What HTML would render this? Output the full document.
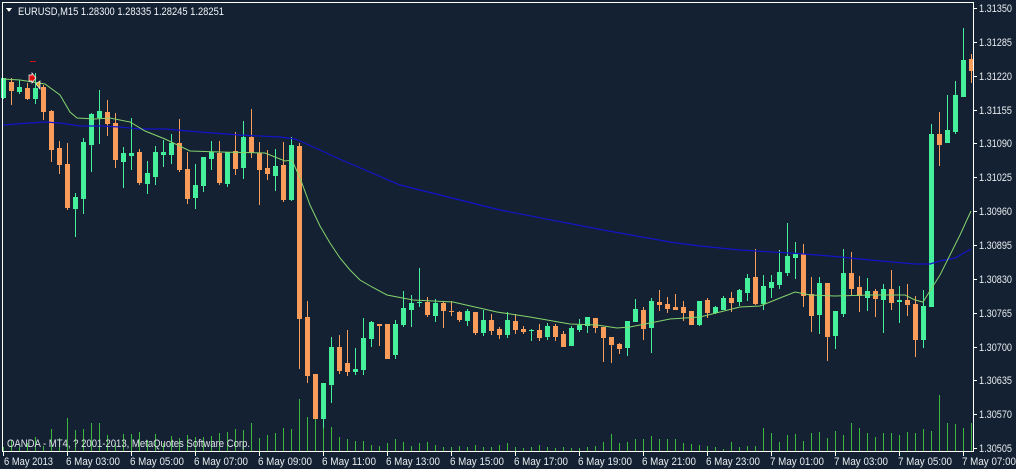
<!DOCTYPE html>
<html><head><meta charset="utf-8"><style>
html,body{margin:0;padding:0;background:#132132;}
body{width:1016px;height:469px;overflow:hidden;position:relative;font-family:"Liberation Sans",sans-serif;}
svg{position:absolute;left:0;top:0;}
</style></head><body>
<svg id="s" width="1016" height="469" xmlns="http://www.w3.org/2000/svg" shape-rendering="crispEdges">
<rect width="1016" height="469" fill="#132132"/>
<g id="vol" fill="#3cb83c"></g>
<g id="c"></g>
<polyline fill="none" stroke="#1414c8" stroke-width="1.2" shape-rendering="auto" points="3,125 15,124 30,123 45,122 60,123 80,126 100,126 120,127 140,129 165,129 200,132 240,135 280,137 295,139 300,141 320,150 335,157 400,185 500,210 603,230 670,242 700,246 740,250 790,253 830,256 870,260 915,264 930,264 940,261 955,258 971,249"/>
<polyline fill="none" stroke="#86d46e" stroke-width="1" shape-rendering="auto" points="3,79 20,80 45,84 60,95 70,112 77,118 95,119 110,118 130,122 145,131 165,139 190,151 220,152 265,153 285,161 292,160 300,178 310,205 320,226 330,243 340,258 350,270 360,280 372,287 387,295 413,300 453,302 497,312 530,317 570,324 597,325 617,328 630,327 670,319 700,317 740,307 760,306 785,296 795,292 810,295 835,296 870,295 905,295 915,300 923,302 940,275 960,235 971,211"/>
<rect x="30" y="61" width="6" height="1" fill="#d01010"/>
<polygon points="29,75 32,75 32,73 36,78 32,83 32,81 29,81" fill="#e01010" stroke="#fff" stroke-width="0.7" shape-rendering="auto"/>
<polygon points="36,84 40,81 40,89" fill="#e0a020" stroke="#fff" stroke-width="0.7" shape-rendering="auto"/>
<g fill="#fff">
<rect x="2" y="2" width="972" height="1"/>
<rect x="2" y="2" width="1" height="450"/>
<rect x="973" y="2" width="1" height="450"/>
<rect x="2" y="451" width="972" height="1"/>
</g>
<g id="ax" fill="#fff"></g>
<g id="t" font-size="11" fill="#e8ecf0" font-family="Liberation Sans, sans-serif"></g>
<text x="7" y="447" font-size="11" fill="#dfe3e8" font-family="Liberation Sans, sans-serif" textLength="243" lengthAdjust="spacingAndGlyphs">OANDA - MT4, ? 2001-2013, MetaQuotes Software Corp.</text>
<polygon points="6,8 12,8 9,12" fill="#fff"/>
<text x="18" y="15" font-size="11" fill="#f0f4f8" font-family="Liberation Sans, sans-serif" textLength="206" lengthAdjust="spacingAndGlyphs">EURUSD,M15  1.28300 1.28335 1.28245 1.28251</text>
</svg>
<script>
var D=[
['g',78,97,78,98],['o',82,90,78,104],['g',87,91,80,93],['o',88,98,83,99],['g',88,98,73,103],['o',87,111,85,119],['o',111,149,110,161],['o',148,164,141,173],['o',164,207,143,209],['g',197,208,193,236],
['g',142,198,138,213],['g',114,144,113,171],['g',111,117,90,143],['o',112,123,100,135],['o',123,159,113,167],['g',153,161,147,187],['g',153,155,118,169],['o',152,182,149,184],['g',173,183,161,193],['g',152,176,146,184],
['g',152,154,140,166],['g',143,154,134,163],['o',143,169,119,171],['o',169,198,152,203],['g',185,197,164,208],['g',157,185,157,191],['g',152,158,141,169],['o',153,182,141,184],['g',152,183,152,186],['o',151,168,132,174],
['g',137,167,121,178],['o',137,152,109,157],['o',153,169,142,204],['o',168,173,150,179],['g',166,175,149,190],['o',165,199,142,201],['g',145,199,137,200],['o',146,318,143,368],['o',317,375,301,382],['o',374,418,374,418],
['g',383,418,383,427],['g',347,384,337,402],['o',347,370,335,373],['o',363,371,330,375],['g',369,371,348,374],['g',338,369,318,374],['g',322,338,321,346],['o',324,325,324,345],['o',324,358,324,358],['g',324,354,320,358],
['g',308,324,291,326],['g',303,309,295,326],['g',302,302,268,306],['o',302,314,297,316],['g',303,315,299,321],['o',303,310,301,327],['o',311,311,301,315],['o',312,319,311,321],['g',311,320,309,325],['o',312,332,312,334],
['g',320,332,310,335],['o',320,330,314,334],['o',329,334,327,338],['g',320,334,312,337],['o',321,329,314,333],['o',329,331,326,333],['g',330,330,329,340],['o',330,337,324,340],['g',326,336,323,339],['o',326,336,324,340],
['o',334,346,331,346],['g',328,345,326,345],['g',325,329,319,331],['g',317,325,317,332],['o',318,327,318,332],['o',327,337,327,361],['o',337,344,337,362],['o',344,348,343,353],['g',321,347,321,355],['g',309,321,299,321],
['o',310,328,307,339],['g',301,327,298,352],['o',302,304,290,310],['o',304,308,297,312],['o',307,309,294,309],['o',307,312,301,320],['o',311,324,311,324],['g',301,324,301,325],['o',300,312,298,317],['g',307,312,306,313],
['g',298,309,296,309],['o',298,302,292,311],['g',290,301,289,305],['g',278,292,274,300],['o',277,303,249,304],['g',286,303,275,309],['g',282,287,275,297],['g',272,284,250,288],['g',256,272,223,275],['g',254,257,242,278],
['o',254,295,244,306],['o',294,315,277,331],['g',283,314,277,333],['o',283,336,283,360],['g',311,335,311,348],['g',273,313,249,316],['o',273,288,252,295],['o',287,295,276,311],['g',291,297,278,310],['o',291,298,289,316],
['g',289,299,284,332],['o',289,302,270,309],['g',300,301,286,322],['o',300,304,284,315],['o',304,339,296,356],['g',306,339,290,347],['g',134,306,124,306],['o',134,144,112,165],['g',130,142,95,142],['g',95,131,81,133],
['g',60,96,28,96],['o',59,70,54,82]];
var V=[447,440,447,443,437,446,429,438,418,430,429,423,423,435,443,434,434,432,440,434,443,436,438,435,437,437,436,433,432,429,430,423,438,435,433,428,429,399,417,418,427,
427,437,439,441,441,445,446,443,439,442,446,443,442,445,447,447,446,447,445,447,447,445,443,447,448,447,445,447,448,447,448,448,447,446,442,434,443,442,439,439,436,439,439,439,
443,444,445,446,447,449,442,447,446,446,428,433,442,435,434,441,433,432,438,431,435,423,428,433,437,433,433,435,432,433,429,431,395,423,424,428,423,432];
var NS="http://www.w3.org/2000/svg";
function R(g,x,y,w,h,f){var r=document.createElementNS(NS,"rect");r.setAttribute("x",x);r.setAttribute("y",y);r.setAttribute("width",w);r.setAttribute("height",h);if(f)r.setAttribute("fill",f);g.appendChild(r);}
function T(x,y,s,len){var e=document.createElementNS(NS,"text");e.setAttribute("x",x);e.setAttribute("y",y);e.setAttribute("textLength",len);e.setAttribute("lengthAdjust","spacingAndGlyphs");e.textContent=s;document.getElementById("t").appendChild(e);}
var c=document.getElementById("c"),vol=document.getElementById("vol");
D.forEach(function(d,k){var col=d[0]=='g'?'#45f09c':'#fb9d5a';var cx=3+8*k;
R(c,cx,d[3],1,d[4]-d[3]+1,col);R(c,cx-2,d[1],5,d[2]-d[1]+1,col);});
V.forEach(function(y,k){if(k<D.length)R(vol,3+8*k,y,1,451-y);});
var ax=document.getElementById("ax");
var P=["1.31350","1.31285","1.31220","1.31155","1.31090","1.31025","1.30960","1.30895","1.30830","1.30765","1.30700","1.30635","1.30570","1.30505"];
P.forEach(function(p,i){var y=Math.round(8+i*33.85);R(ax,973,y,4,1);T(979,y+4,p,33);});
var L=["6 May 2013","6 May 03:00","6 May 05:00","6 May 07:00","6 May 09:00","6 May 11:00","6 May 13:00","6 May 15:00","6 May 17:00","6 May 19:00","6 May 21:00","6 May 23:00","7 May 01:00","7 May 03:00","7 May 05:00","7 May 07:00"];
L.forEach(function(s,i){var x=3+64*i;R(ax,x,451,1,5);if(i==0)T(4,465,s,49);else T(x-1,465,s,54);});
</script>
</body></html>
